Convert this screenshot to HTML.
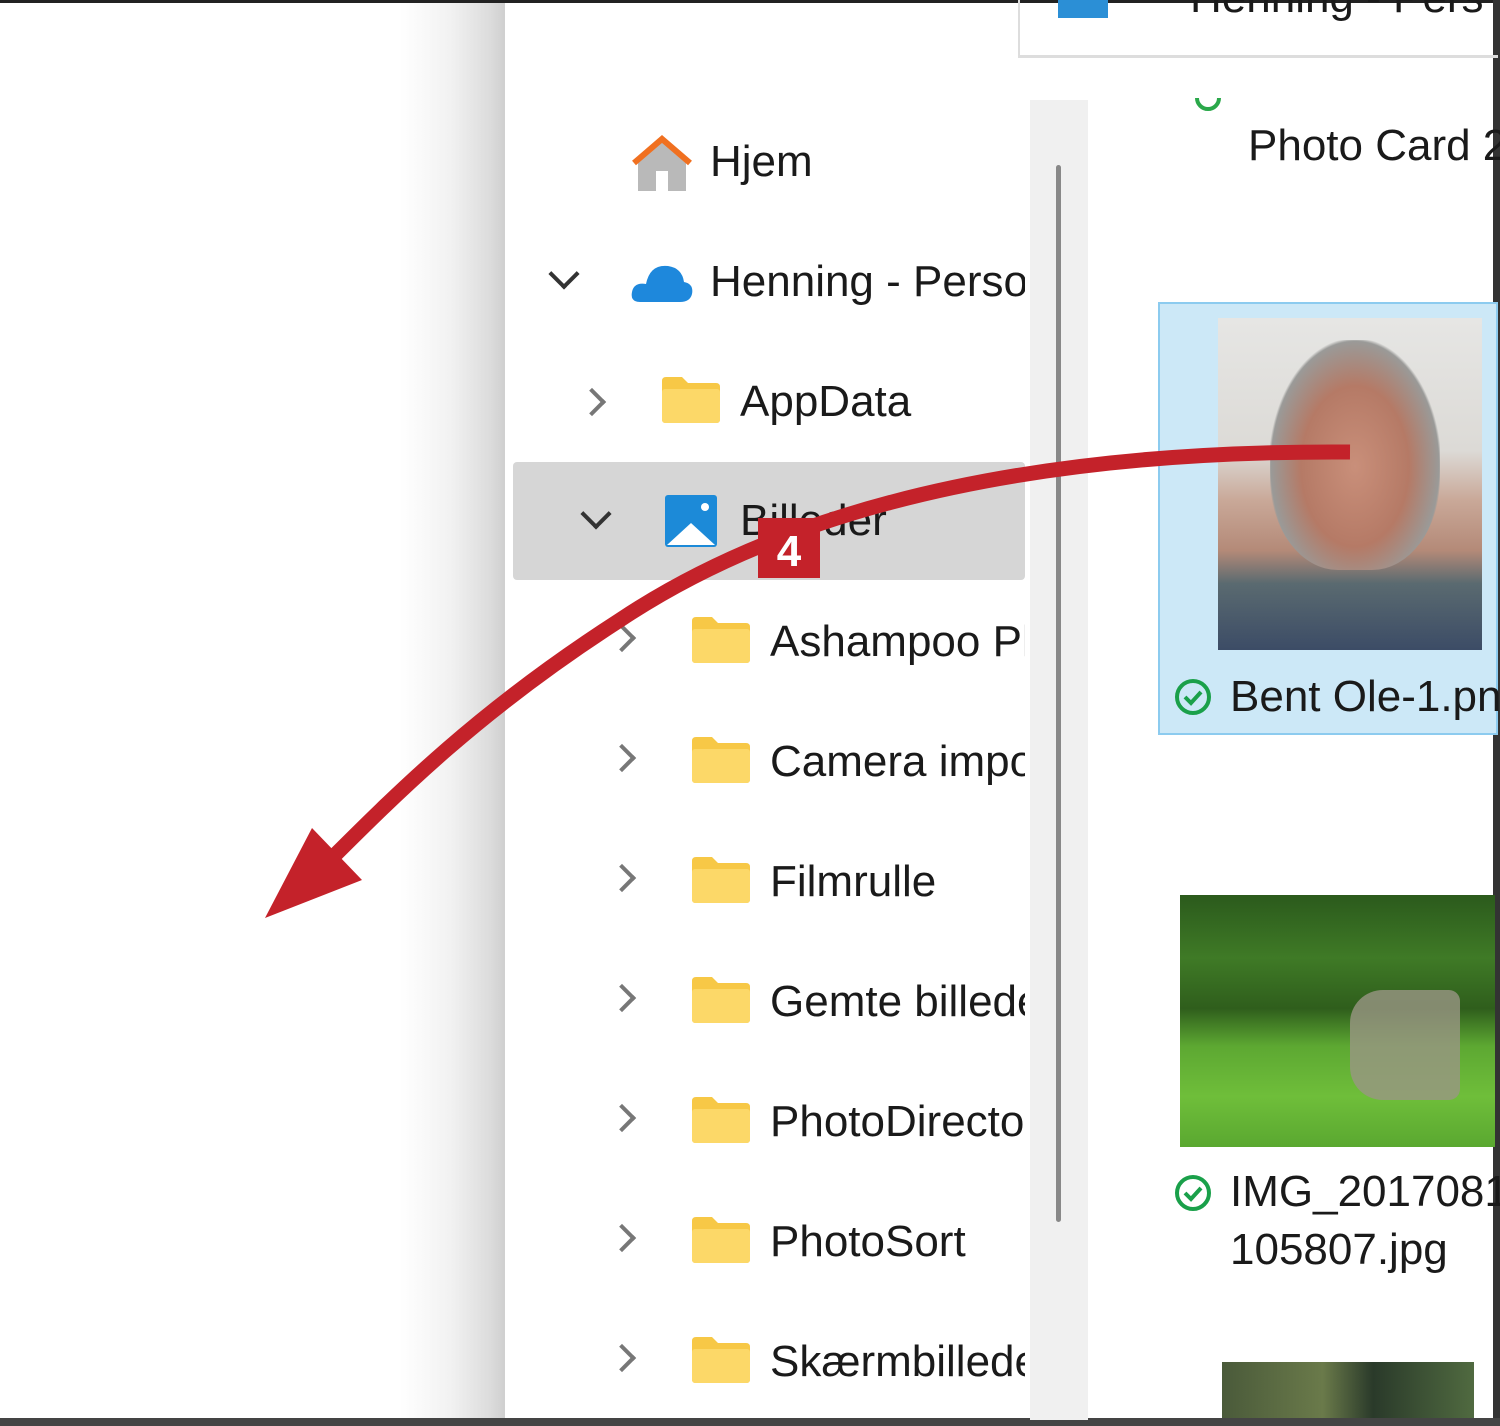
<!DOCTYPE html>
<html><head><meta charset="utf-8"><style>
*{margin:0;padding:0;box-sizing:border-box}
body{width:1500px;height:1426px;overflow:hidden;background:#fff;position:relative;font-family:"Liberation Sans",sans-serif;color:#1a1a1a}
.a{position:absolute}
.t{position:absolute;font-size:44px;line-height:48px;white-space:nowrap;letter-spacing:0}
.chev{position:absolute;width:20px;height:20px;border-right:4px solid #777;border-bottom:4px solid #777}
.fold{position:absolute;width:58px;height:46px}
</style></head><body>
<div class="a" style="left:0;top:0;width:505px;height:1426px;background:linear-gradient(to right,#fff 0,#fff 400px,#f2f2f2 450px,#dcdcdc 490px,#cfcfcf 505px)"></div>
<div class="a" style="left:505px;top:0;width:995px;height:1426px;background:#fff"></div>
<div class="a" style="left:0;top:0;width:1500px;height:3px;background:#222"></div>
<div class="a" style="left:1493px;top:0;width:7px;height:1426px;background:#333"></div>
<div class="a" style="left:0;top:1418px;width:1500px;height:8px;background:#444"></div>
<div class="a" style="left:1018px;top:0;width:480px;height:58px;border-left:2px solid #ddd;border-bottom:3px solid #ddd"></div>
<div class="a" style="left:1058px;top:0;width:50px;height:18px;background:#2b8fd6"></div>
<div class="t" style="left:1190px;top:-26px">Henning - Pers</div>
<div class="a" style="left:1030px;top:100px;width:58px;height:1320px;background:#f0f0f0"></div>
<div class="a" style="left:1056px;top:165px;width:5px;height:1057px;background:#888;border-radius:3px"></div>
<div class="a" style="left:513px;top:462px;width:512px;height:118px;background:#d6d6d6;border-radius:4px"></div>
<svg class="a" style="left:630px;top:135px" width="64" height="58" viewBox="0 0 64 58"><path d="M8 26 L32 4 L56 26 L56 56 L8 56Z" fill="#b9b9b9"/><rect x="26" y="36" width="12" height="20" fill="#fff"/><path d="M4 28 L32 4 L60 28" fill="none" stroke="#f07020" stroke-width="6"/></svg>
<div class="t" style="left:710px;top:138px">Hjem</div>
<div class="a" style="left:553px;top:263px;width:22px;height:22px;border-right:4px solid #333;border-bottom:4px solid #333;transform:rotate(45deg)"></div>
<svg class="a" style="left:630px;top:258px" width="64" height="46"><path d="M10 44 Q0 44 2 34 Q4 24 16 26 Q20 6 38 8 Q52 10 54 24 Q64 26 62 36 Q60 44 50 44Z" fill="#1e88dc"/></svg>
<div class="t" style="left:710px;top:258px;width:315px;overflow:hidden">Henning - Personal</div>
<div class="chev" style="left:582px;top:392px;transform:rotate(-45deg)"></div>
<svg class="fold" style="left:662px;top:377px" viewBox="0 0 58 46"><path d="M0 4 Q0 0 4 0 H20 L26 6 H54 Q58 6 58 10 V42 Q58 46 54 46 H4 Q0 46 0 42Z" fill="#f7c846"/><rect x="0" y="12" width="58" height="34" rx="3" fill="#fcd868"/></svg>
<div class="t" style="left:740px;top:378px">AppData</div>
<div class="a" style="left:585px;top:503px;width:22px;height:22px;border-right:4px solid #333;border-bottom:4px solid #333;transform:rotate(45deg)"></div>
<svg class="a" style="left:665px;top:495px" width="52" height="52"><rect width="52" height="52" rx="3" fill="#1c8ad8"/><circle cx="40" cy="12" r="4" fill="#fff"/><path d="M2 50 L26 28 L50 50Z" fill="#fff"/></svg>
<div class="t" style="left:740px;top:497px">Billeder</div>
<div id="list"></div>
<div class="a" style="left:1195px;top:85px;width:26px;height:26px;border:4px solid #2aa84a;border-radius:50%;clip-path:inset(50% 0 0 0)"></div>
<div class="t" style="left:1248px;top:122px">Photo Card 2</div>
<div class="a" style="left:1158px;top:302px;width:340px;height:433px;background:#cce8f7;border:2px solid #8ccbef"></div>
<div class="a" style="left:1218px;top:318px;width:264px;height:332px;background:linear-gradient(#e6e6e4 0,#dcdad6 40%,#c9a898 55%,#b48a78 70%,#5a6a70 80%,#3c4c66 100%)"></div>
<div class="a" style="left:1270px;top:340px;width:170px;height:230px;border-radius:45% 45% 40% 40%;background:radial-gradient(ellipse at 50% 55%,#c98f7a 0,#b57a66 45%,#9a9a98 70%,transparent 72%)"></div>
<svg class="a" style="left:1172px;top:676px" width="42" height="42"><circle cx="21" cy="21" r="16" fill="none" stroke="#1aa04a" stroke-width="4"/><path d="M13 21 L19 27 L29 16" fill="none" stroke="#1aa04a" stroke-width="4"/></svg>
<div class="t" style="left:1230px;top:673px">Bent Ole-1.png</div>
<div class="a" style="left:1180px;top:895px;width:315px;height:252px;background:linear-gradient(#2b5a1c 0,#3f7a26 25%,#2f5e1c 45%,#5da832 60%,#6fbe3a 80%,#5aa830 100%)"></div>
<div class="a" style="left:1350px;top:990px;width:110px;height:110px;background:#9a9684;border-radius:30% 10% 10% 30%;opacity:.8"></div>
<svg class="a" style="left:1172px;top:1172px" width="42" height="42"><circle cx="21" cy="21" r="16" fill="none" stroke="#1aa04a" stroke-width="4"/><path d="M13 21 L19 27 L29 16" fill="none" stroke="#1aa04a" stroke-width="4"/></svg>
<div class="t" style="left:1230px;top:1168px">IMG_20170819_</div>
<div class="t" style="left:1230px;top:1226px">105807.jpg</div>
<div class="a" style="left:1222px;top:1362px;width:252px;height:56px;background:linear-gradient(90deg,#4a5a3a,#6a7a4a 40%,#2a3a2a 60%,#506a40)"></div>
<svg class="a" style="left:0;top:0" width="1500" height="1426">
<path d="M1350 452 C1050 450 800 500 620 620 C480 710 400 790 320 870" fill="none" stroke="#c4222a" stroke-width="15"/>
<path d="M265 918 L312 828 L362 880Z" fill="#c4222a"/>
<rect x="758" y="518" width="62" height="60" fill="#c4222a"/>
<text x="789" y="566" font-family="Liberation Sans" font-weight="bold" font-size="44" fill="#fff" text-anchor="middle">4</text>
</svg>
<script>
var n=["Ashampoo Photo","Camera imports","Filmrulle","Gemte billeder","PhotoDirector","PhotoSort","Skærmbilleder"],h="";
n.forEach(function(s,i){var y=640+i*120;
h+='<div class="chev" style="left:612px;top:'+(y-12)+'px;transform:rotate(-45deg)"></div>';
h+='<svg class="fold" style="left:692px;top:'+(y-23)+'px" viewBox="0 0 58 46"><path d="M0 4 Q0 0 4 0 H20 L26 6 H54 Q58 6 58 10 V42 Q58 46 54 46 H4 Q0 46 0 42Z" fill="#f7c846"/><rect x="0" y="12" width="58" height="34" rx="3" fill="#fcd868"/></svg>';
h+='<div class="t" style="left:770px;top:'+(y-22)+'px;width:255px;overflow:hidden">'+s+'</div>';});
document.getElementById("list").innerHTML=h;
</script>
</body></html>
